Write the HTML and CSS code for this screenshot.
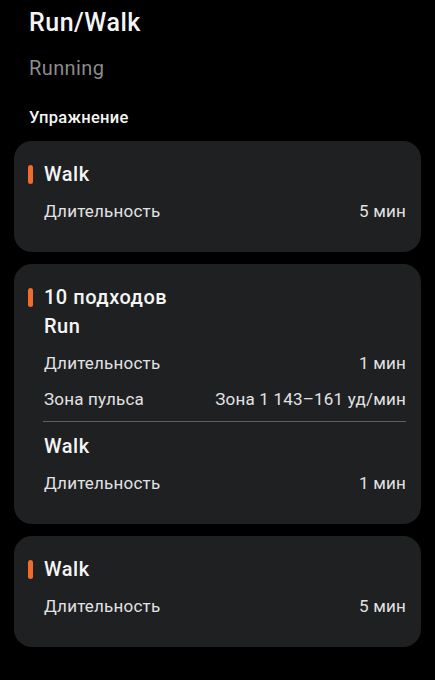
FILE: index.html
```html
<!DOCTYPE html>
<html lang="ru">
<head>
<meta charset="utf-8">
<link rel="stylesheet" href="styles.css">
</head>
<body>
<header class="head">
  <h1 class="title">Run/Walk</h1>
  <div class="subtitle">Running</div>
  <h2 class="section">Упражнение</h2>
</header>
<main class="cards">
  <section class="card">
    <div class="card-title"><span class="bar"></span>Walk</div>
    <div class="row"><span>Длительность</span><span>5 мин</span></div>
  </section>
  <section class="card">
    <div class="card-title"><span class="bar"></span>10 подходов</div>
    <div class="step-title">Run</div>
    <div class="row"><span>Длительность</span><span>1 мин</span></div>
    <div class="row row-tight"><span>Зона пульса</span><span>Зона 1 143–161 уд/мин</span></div>
    <div class="divider"></div>
    <div class="step-title step-after">Walk</div>
    <div class="row"><span>Длительность</span><span>1 мин</span></div>
  </section>
  <section class="card">
    <div class="card-title"><span class="bar"></span>Walk</div>
    <div class="row"><span>Длительность</span><span>5 мин</span></div>
  </section>
</main>
</body>
</html>
```
FILE: styles.css
```css
* { box-sizing: border-box; }
html, body { margin: 0; padding: 0; background: #000; }
body {
  font-family: Roboto, "Noto Sans", sans-serif;
  color: #f5f5f5;
  width: 435px;
}
.head {
  padding: 8px 29px 0;
  display: flex;
  flex-direction: column;
}
.title {
  margin: 0;
  font-size: 25px;
  letter-spacing: 0.5px;
  font-weight: 500;
  line-height: 30px;
}
.subtitle {
  margin-top: 18px;
  font-size: 20px;
  letter-spacing: 0.4px;
  line-height: 24px;
  color: #8c8c8c;
}
.section {
  margin: 27px 0 0;
  font-size: 16.5px;
  letter-spacing: 0.3px;
  font-weight: 500;
  line-height: 22px;
}
.cards {
  padding: 12px 14px 0;
  display: flex;
  flex-direction: column;
  gap: 12px;
}
.card {
  background: #1f2022;
  border-radius: 18px;
  padding: 20px 15px 30px 14px;
  display: flex;
  flex-direction: column;
}
.card-title, .step-title {
  font-size: 20px;
  letter-spacing: 0.5px;
  font-weight: 500;
  line-height: 26px;
  display: flex;
  align-items: center;
}
.step-title { padding-left: 16px; margin-top: 3px; }
.step-after { margin-top: 11px; }
.bar {
  width: 5px;
  height: 19px;
  border-radius: 3px;
  background: #f26a2c;
  margin-right: 11px;
}
.row {
  display: flex;
  justify-content: space-between;
  padding-left: 16px;
  margin-top: 13px;
  font-size: 17px;
  letter-spacing: 0.2px;
  line-height: 22px;
  color: #e2e2e2;
}
.row-tight { margin-top: 14px; }
.divider {
  height: 1px;
  background: #5e5e60;
  margin: 11px 0 0 15px;
}
```
